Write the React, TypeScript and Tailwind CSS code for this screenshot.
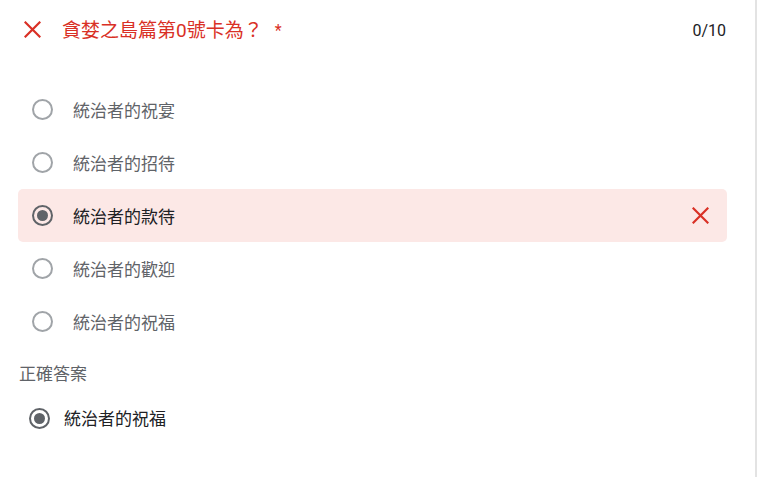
import React from "react";

const XIcon = ({ size = 17 }: { size?: number }) => (
  <svg width={size} height={size} viewBox="0 0 17 17" fill="none">
    <path d="M1.5 1.5L15.5 15.5M15.5 1.5L1.5 15.5" stroke="#d93025" strokeWidth="2.2" strokeLinecap="square" />
  </svg>
);

const Radio = ({ checked, light }: { checked?: boolean; light?: boolean }) => (
  <span
    className={`flex items-center justify-center w-[21px] h-[21px] rounded-full border-2 shrink-0 ${
      checked ? "border-[#5f6368]" : light ? "border-[#a0a4a8]" : "border-[#5f6368]"
    }`}
  >
    {checked && <span className="w-[11px] h-[11px] rounded-full bg-[#5f6368]" />}
  </span>
);

const options = ["統治者的祝宴", "統治者的招待", "統治者的款待", "統治者的歡迎", "統治者的祝福"];

export default function App() {
  return (
    <div className="w-[757px] h-[477px] flex bg-white font-['Noto_Sans_CJK_TC','Noto_Sans',sans-serif]">
      <div className="flex-1 flex flex-col">
        <div className="h-[58px] flex items-center pl-[24px] pr-[29px]">
          <XIcon />
          <span className="ml-[21px] mt-[3px] font-['Roboto','Noto_Sans_CJK_TC',sans-serif] text-[19px] text-[#d93025] leading-none">
            貪婪之島篇第0號卡為？
          </span>
          <span className="ml-[12px] mt-[3px] font-['Roboto',sans-serif] text-[16px] text-[#d93025] leading-none">*</span>
          <span className="ml-auto mt-[3px] font-['Roboto',sans-serif] text-[16px] text-[#202124] leading-none">0/10</span>
        </div>
        <div className="mt-[25px] pl-[18px] pr-[28px] flex flex-col">
          {options.map((o, i) => {
            const sel = i === 2;
            return (
              <div
                key={o}
                className={`h-[53px] flex items-center pl-[14px] pr-[18px] rounded-[5px] ${sel ? "bg-[#fce8e6]" : ""}`}
              >
                <Radio checked={sel} light={!sel} />
                <span className={`ml-[20px] text-[17px] ${sel ? "text-[#202124]" : "text-[#5f6368]"}`}>{o}</span>
                {sel && (
                  <span className="ml-auto">
                    <XIcon />
                  </span>
                )}
              </div>
            );
          })}
        </div>
        <div className="mt-[13px] pl-[19px] text-[17px] leading-[24px] text-[#5f6368]">正確答案</div>
        <div className="mt-[8px] h-[50px] flex items-center pl-[29px]">
          <Radio checked />
          <span className="ml-[14px] text-[17px] text-[#202124]">統治者的祝福</span>
        </div>
      </div>
      <div className="w-[2px] bg-[#e3e3e3]" />
    </div>
  );
}
